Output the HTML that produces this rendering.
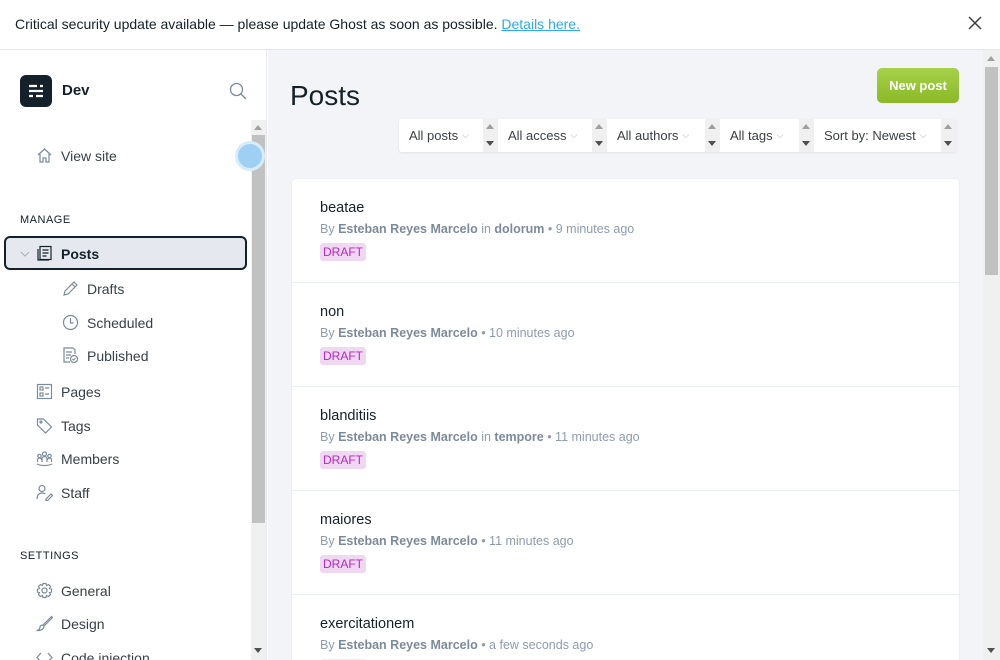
<!DOCTYPE html>
<html><head><meta charset="utf-8"><style>
*{box-sizing:border-box;margin:0;padding:0}
html,body{width:1000px;height:660px;overflow:hidden}
body{font-family:"Liberation Sans","DejaVu Sans",sans-serif;background:#fff;color:#15212a;position:relative}
.banner{position:absolute;left:0;top:0;width:1000px;height:50px;border-bottom:1px solid #e3e6ea;background:#fff;font-size:14px;line-height:49px;padding-left:15px;color:#15212a}
.banner a{color:#30a9e8;text-decoration:underline}
.banner .x{position:absolute;right:18px;top:16px}
.side{position:absolute;left:0;top:50px;width:267px;height:610px;background:#fff;border-right:1px solid #e6e8eb;overflow:hidden}
.logo{position:absolute;left:20px;top:25px;width:32px;height:32px;background:#15212a;border-radius:6px}
.dev{position:absolute;left:62px;top:32px;font-size:15px;font-weight:bold}
.srch{position:absolute;left:229px;top:32px}
.sb{position:absolute;left:251px;top:70px;width:15px;height:540px;background:#f0f0f0}
.sb .th{position:absolute;left:1px;top:15px;width:13px;height:388px;background:#c1c1c1}
.tri{position:absolute;width:0;height:0;border-left:4px solid transparent;border-right:4px solid transparent}
.item{position:absolute;left:36px;font-size:14px;color:#394047;display:flex;align-items:center;gap:8px}
.item svg{width:17px;height:17px;stroke:#7c8b9a;fill:none;stroke-width:1.2}
.sub{left:62px}
.hd{position:absolute;left:20px;font-size:11px;letter-spacing:.5px;color:#15212a}
.active{position:absolute;left:4px;top:186px;width:243px;height:34px;background:#e5e9ef;border:2px solid #15212a;border-radius:6px}
.main{position:absolute;left:268px;top:50px;width:715px;height:610px;background:#f3f4f7;overflow:hidden}
h1{position:absolute;left:22px;top:30px;font-size:28px;font-weight:normal;color:#15212a}
.np{position:absolute;left:609px;top:18px;width:82px;height:35px;background:linear-gradient(#a6d14a,#8bb927);border-radius:5px;color:#fff;font-weight:bold;font-size:13px;text-align:center;line-height:35px}
.filters{position:absolute;left:131px;top:69px;height:33px;display:flex;background:#fff;border-radius:3px;box-shadow:0 1px 2px rgba(0,0,0,.08)}
.f{font-size:13px;color:#394047;line-height:33px;padding-left:10px;display:flex;white-space:nowrap}
.f span.c{color:#aab;font-size:9px;margin-left:4px}
.sp{width:15px;background:#f0f0f0;position:relative}
.list{position:absolute;left:23px;top:128px;width:669px;height:500px;background:#fff;border-radius:5px;border:1px solid #eceef0}
.post{height:104px;border-bottom:1px solid #ebeef0;padding:21px 0 0 28px}
.t{font-size:14.5px;color:#15212a;margin-bottom:6px}
.m{font-size:12.5px;color:#8e9cac}
.m b{color:#7c8b9a}
.d{display:inline-block;margin-top:7px;background:#f0d7f2;color:#b02cbe;font-size:12px;padding:2px 3px;border-radius:3px}
.msb{position:absolute;left:983px;top:50px;width:17px;height:610px;background:#f0f0f0}
.msb .th{position:absolute;left:2px;top:17px;width:13px;height:208px;background:#c1c1c1}
</style></head><body>
<div class="banner">Critical security update available — please update Ghost as soon as possible. <a>Details here.</a>
<svg class="x" width="14" height="14" viewBox="0 0 14 14"><path d="M1 1L13 13M13 1L1 13" stroke="#394047" stroke-width="1.5"/></svg></div>
<div class="side">
<div class="logo"><svg width="32" height="32" viewBox="0 0 32 32"><path d="M9 11h8M20 11h3M9 16h14M9 21h4M16 21h7" stroke="#fff" stroke-width="2.2"/></svg></div>
<div class="dev">Dev</div>
<svg class="srch" width="18" height="18" viewBox="0 0 18 18"><circle cx="7.5" cy="7.5" r="6" fill="none" stroke="#7c8b9a" stroke-width="1.3"/><path d="M12 12l5 5" stroke="#7c8b9a" stroke-width="1.3"/></svg>
<div class="sb"><div class="tri" style="left:3px;top:5px;border-bottom:5px solid #a0a0a0"></div><div class="th"></div><div class="tri" style="left:3px;top:528px;border-top:5px solid #505050"></div></div>
<div style="position:absolute;left:235px;top:91px;width:30px;height:30px;border-radius:50%;background:#9fd0f3;border:3px solid #d6ecfb"></div>
<div class="item" style="top:97px"><svg viewBox="0 0 17 17"><path d="M2 8L8.5 2 15 8M4 7v8h3v-4h3v4h3V7"/></svg>View site</div>
<div class="hd" style="top:164px">MANAGE</div>
<div class="active"></div>
<svg style="position:absolute;left:20px;top:200px" width="10" height="8" viewBox="0 0 10 8"><path d="M1 2l4 4 4-4" fill="none" stroke="#aab" stroke-width="1"/></svg>
<div class="item" style="top:195px;color:#15212a;font-weight:bold"><svg viewBox="0 0 17 17" style="stroke:#15212a"><rect x="4" y="1.5" width="11" height="13"/><path d="M2 4v11h11M6.5 5h6M6.5 8h6M6.5 11h4"/></svg>Posts</div>
<div class="item sub" style="top:230px"><svg viewBox="0 0 17 17"><path d="M12 2l3 3-9 9-4 1 1-4z M10 4l3 3"/></svg>Drafts</div>
<div class="item sub" style="top:264px"><svg viewBox="0 0 17 17"><circle cx="8.5" cy="8.5" r="7"/><path d="M8.5 4v5h3"/></svg>Scheduled</div>
<div class="item sub" style="top:297px"><svg viewBox="0 0 17 17"><path d="M8 15H2V1h9l2 2v4M4 5h6M4 8h5M4 11h3"/><circle cx="12" cy="12" r="3.5"/><path d="M10.5 12l1 1 2-2"/></svg>Published</div>
<div class="item" style="top:333px"><svg viewBox="0 0 17 17"><rect x="1.5" y="1.5" width="14" height="14"/><rect x="4" y="4" width="3" height="3"/><rect x="4" y="10" width="3" height="3"/><path d="M9 5h4M9 11h4"/></svg>Pages</div>
<div class="item" style="top:367px"><svg viewBox="0 0 17 17"><path d="M1.5 2v6l8 8 6-6-8-8z"/><circle cx="5" cy="5" r="1"/></svg>Tags</div>
<div class="item" style="top:400px"><svg viewBox="0 0 17 17"><circle cx="8.5" cy="4" r="2"/><circle cx="3.5" cy="6" r="1.7"/><circle cx="13.5" cy="6" r="1.7"/><path d="M6 12v-3a2.5 2.5 0 015 0v3M1.5 12v-2a2 2 0 014 0M11.5 10a2 2 0 014 0v2M1 14c4 2 11 2 15 0"/></svg>Members</div>
<div class="item" style="top:434px"><svg viewBox="0 0 17 17"><circle cx="6" cy="4.5" r="3"/><path d="M1 15c0-4 2-6 5-6 1.5 0 2.5.4 3 1M10 15l5-5 1.5 1.5-5 5H10z"/></svg>Staff</div>
<div class="hd" style="top:500px">SETTINGS</div>
<div class="item" style="top:532px"><svg viewBox="0 0 17 17"><circle cx="8.5" cy="8.5" r="2.5"/><path d="M7 1.5h3l.5 2 2-1 2 2-1 2 2 .5v3l-2 .5 1 2-2 2-2-1-.5 2H7l-.5-2-2 1-2-2 1-2-2-.5V7l2-.5-1-2 2-2 2 1z"/></svg>General</div>
<div class="item" style="top:565px"><svg viewBox="0 0 17 17"><path d="M15.5 1.5L7 10l1 1 8.5-8.5zM7 10c-3 0-3 2-3.5 4L1.5 15.5c3 0 6-.5 6.5-4.5"/></svg>Design</div>
<div class="item" style="top:599px"><svg viewBox="0 0 17 17"><path d="M5 4L1 8.5 5 13M12 4l4 4.5-4 4.5"/></svg>Code injection</div>
</div>
<div class="main">
<h1>Posts</h1>
<div class="np">New post</div>
<div class="filters">
<div class="f" style="width:84px">All posts<span class="c">⌵</span></div><div class="sp"><div class="tri" style="left:3px;top:5px;border-bottom:5px solid #a0a0a0"></div><div class="tri" style="left:3px;top:22px;border-top:5px solid #505050"></div></div>
<div class="f" style="width:94px">All access<span class="c">⌵</span></div><div class="sp"><div class="tri" style="left:3px;top:5px;border-bottom:5px solid #a0a0a0"></div><div class="tri" style="left:3px;top:22px;border-top:5px solid #505050"></div></div>
<div class="f" style="width:98px">All authors<span class="c">⌵</span></div><div class="sp"><div class="tri" style="left:3px;top:5px;border-bottom:5px solid #a0a0a0"></div><div class="tri" style="left:3px;top:22px;border-top:5px solid #505050"></div></div>
<div class="f" style="width:79px">All tags<span class="c">⌵</span></div><div class="sp"><div class="tri" style="left:3px;top:5px;border-bottom:5px solid #a0a0a0"></div><div class="tri" style="left:3px;top:22px;border-top:5px solid #505050"></div></div>
<div class="f" style="width:127px">Sort by: Newest<span class="c">⌵</span></div><div class="sp"><div class="tri" style="left:3px;top:5px;border-bottom:5px solid #a0a0a0"></div><div class="tri" style="left:3px;top:22px;border-top:5px solid #505050"></div></div>
</div>
<div class="list">
<div class="post"><div class="t">beatae</div><div class="m">By <b>Esteban Reyes Marcelo</b> in <b>dolorum</b> • 9 minutes ago</div><span class="d">DRAFT</span></div>
<div class="post"><div class="t">non</div><div class="m">By <b>Esteban Reyes Marcelo</b> • 10 minutes ago</div><span class="d">DRAFT</span></div>
<div class="post"><div class="t">blanditiis</div><div class="m">By <b>Esteban Reyes Marcelo</b> in <b>tempore</b> • 11 minutes ago</div><span class="d">DRAFT</span></div>
<div class="post"><div class="t">maiores</div><div class="m">By <b>Esteban Reyes Marcelo</b> • 11 minutes ago</div><span class="d">DRAFT</span></div>
<div class="post" style="border:0"><div class="t">exercitationem</div><div class="m">By <b>Esteban Reyes Marcelo</b> • a few seconds ago</div><span class="d" style="background:#e5eff7;color:#e5eff7">SCHED</span></div>
</div>
</div>
<div class="msb"><div class="tri" style="left:4px;top:6px;border-bottom:5px solid #a0a0a0"></div><div class="th"></div><div class="tri" style="left:4px;top:598px;border-top:5px solid #505050"></div></div>
</body></html>
